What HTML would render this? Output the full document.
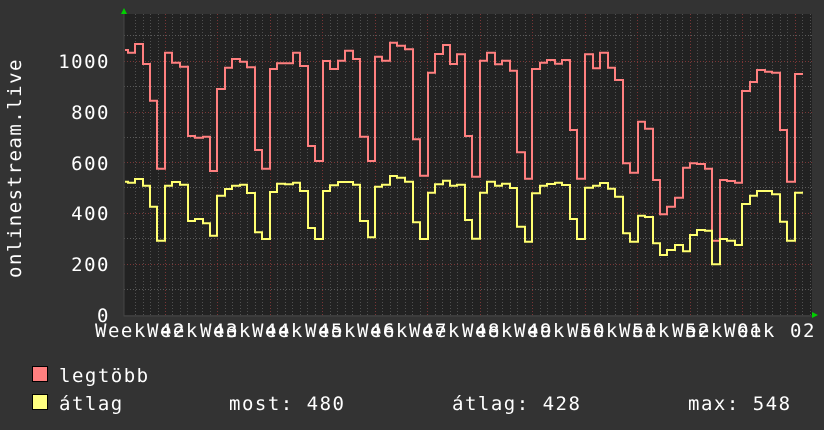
<!DOCTYPE html>
<html><head><meta charset="utf-8"><style>
html,body{margin:0;padding:0;background:#333333;}
svg{display:block}
text{font-family:"DejaVu Sans Mono","Liberation Mono",monospace;fill:#ffffff;font-size:19px;letter-spacing:1.5px}
</style></head><body>
<svg width="824" height="430" viewBox="0 0 824 430" xmlns="http://www.w3.org/2000/svg">
<rect width="824" height="430" fill="#333333"/>
<rect x="124" y="14" width="688" height="301" fill="#222222"/>
<g stroke="#5a5a5a" stroke-width="1" stroke-dasharray="1,2">
<path d="M124 289.5H812M124 238.5H812M124 187.5H812M124 137.5H812M124 86.5H812M124 35.5H812"/>
</g>
<g stroke="#7a3636" stroke-width="1" stroke-dasharray="1,2">
<path d="M124 264.5H812M124 213.5H812M124 162.5H812M124 112.5H812M124 61.5H812"/>
<path d="M165.5 14V315M217.5 14V315M270.5 14V315M322.5 14V315M375.5 14V315M427.5 14V315M480.5 14V315M532.5 14V315M585.5 14V315M637.5 14V315M690.5 14V315M742.5 14V315M795.5 14V315"/>
</g>
<path stroke="#505050" stroke-width="1" stroke-dasharray="1,2" d="M135.5 14V315M143.5 14V315M150.5 14V315M158.5 14V315M172.5 14V315M180.5 14V315M187.5 14V315M195.5 14V315M202.5 14V315M210.5 14V315M225.5 14V315M232.5 14V315M240.5 14V315M247.5 14V315M255.5 14V315M262.5 14V315M277.5 14V315M285.5 14V315M292.5 14V315M300.5 14V315M307.5 14V315M315.5 14V315M330.5 14V315M337.5 14V315M345.5 14V315M352.5 14V315M360.5 14V315M367.5 14V315M382.5 14V315M390.5 14V315M397.5 14V315M405.5 14V315M412.5 14V315M420.5 14V315M435.5 14V315M442.5 14V315M450.5 14V315M457.5 14V315M465.5 14V315M472.5 14V315M487.5 14V315M495.5 14V315M502.5 14V315M510.5 14V315M517.5 14V315M525.5 14V315M540.5 14V315M547.5 14V315M555.5 14V315M562.5 14V315M570.5 14V315M577.5 14V315M592.5 14V315M600.5 14V315M607.5 14V315M615.5 14V315M622.5 14V315M630.5 14V315M645.5 14V315M652.5 14V315M660.5 14V315M667.5 14V315M675.5 14V315M682.5 14V315M697.5 14V315M705.5 14V315M712.5 14V315M720.5 14V315M727.5 14V315M735.5 14V315M750.5 14V315M757.5 14V315M765.5 14V315M772.5 14V315M780.5 14V315M787.5 14V315M802.5 14V315M810.5 14V315"/>
<path d="M124 14V316H812" stroke="#444" stroke-width="1" fill="none"/>
<polygon points="121,14 127,14 124,8" fill="#00d000"/>
<polygon points="812,312 812,318 818,315" fill="#00d000"/>
<path fill="none" stroke="#ff7f7f" stroke-width="2" d="M125 50 H128 V52.7 H135 V44 H143 V64 H150 V100.7 H157 V168.7 H165 V52.7 H172 V62.7 H180 V66.7 H188 V136 H195 V137.7 H203 V136.7 H210 V171 H217 V89 H225 V67.7 H232 V59 H240 V61.7 H247 V67.3 H255 V150 H262 V168.7 H270 V69 H277 V63.3 H293 V52.7 H300 V66 H308 V146 H315 V161 H323 V61 H330 V69 H338 V60.7 H345 V50.7 H353 V59 H360 V136.7 H368 V161 H375 V56.7 H382 V60.7 H390 V42.7 H397 V45.7 H405 V49.3 H413 V139.3 H420 V175.7 H428 V72.7 H435 V54 H443 V45 H450 V64 H457 V54.3 H465 V136 H472 V176.7 H480 V60.7 H487 V52.7 H495 V64.3 H502 V60.7 H510 V70.7 H517 V152.3 H525 V178.7 H532 V69 H540 V62.7 H547 V60 H555 V63.7 H562 V60 H570 V130 H577 V178.7 H585 V54.3 H593 V68.3 H600 V52.7 H608 V67.7 H615 V80 H623 V163.3 H630 V172.7 H638 V121.7 H645 V128.7 H653 V180 H660 V214.3 H667 V206.7 H675 V197.7 H683 V167.7 H690 V163.3 H697 V164 H705 V168.7 H712 V240.7 H720 V180 H727 V181 H735 V182.7 H742 V91 H750 V82 H757 V70 H765 V71.7 H772 V72.7 H780 V130 H787 V181.7 H795 V74 H803"/>
<path fill="none" stroke="#ffff70" stroke-width="2" d="M125 181.7 H128 V182.7 H135 V179 H143 V185.7 H150 V206.7 H157 V240.7 H165 V185.7 H172 V182 H180 V184.7 H188 V221 H195 V219 H203 V223.3 H210 V235.7 H217 V195.7 H225 V189 H232 V185.7 H240 V184.7 H247 V193 H255 V232.3 H262 V239 H270 V192 H277 V183.7 H285 V184.3 H293 V182.7 H300 V191 H308 V228 H315 V239 H323 V191 H330 V185.3 H338 V182 H353 V184.7 H360 V221 H368 V237.3 H375 V186.7 H382 V184.7 H390 V176 H397 V177.7 H405 V181.7 H413 V222.3 H420 V239 H428 V192.7 H435 V184.3 H443 V180.7 H450 V185.7 H457 V184.7 H465 V220 H472 V238.7 H480 V192.7 H487 V181.7 H495 V185.7 H502 V183.7 H510 V188 H517 V226.7 H525 V241.7 H532 V193.3 H540 V185.7 H547 V184 H555 V182.7 H562 V185 H570 V219 H577 V239 H585 V187.7 H593 V185.7 H600 V183 H608 V188.7 H615 V196.7 H623 V233.3 H630 V241.7 H638 V215.7 H645 V217 H653 V243.3 H660 V255 H667 V250 H675 V245 H683 V251.3 H690 V235 H697 V230 H705 V230.7 H712 V264.3 H720 V239 H727 V240.7 H735 V245 H742 V204 H750 V195.7 H757 V191 H772 V194.3 H780 V221.7 H787 V240.7 H795 V192.7 H803"/>
<g text-anchor="end">
<text x="110" y="68">1000</text>
<text x="110" y="119">800</text>
<text x="110" y="170">600</text>
<text x="110" y="220">400</text>
<text x="110" y="271">200</text>
<text x="110" y="322">0</text>
</g>
<text transform="translate(21,168) rotate(-90)" text-anchor="middle">onlinestream.live</text>
<g>
<text x="95" y="337">Week</text>
<text x="147" y="337">Week</text>
<text x="200" y="337">Week</text>
<text x="252" y="337">Week</text>
<text x="305" y="337">Week</text>
<text x="357" y="337">Week</text>
<text x="409" y="337">Week</text>
<text x="462" y="337">Week</text>
<text x="514" y="337">Week</text>
<text x="567" y="337">Week</text>
<text x="619" y="337">Week</text>
<text x="672" y="337">Week</text>
<text x="724" y="337">Week</text>
<text x="160" y="337">42</text>
<text x="213" y="337">43</text>
<text x="265" y="337">44</text>
<text x="318" y="337">45</text>
<text x="370" y="337">46</text>
<text x="422" y="337">47</text>
<text x="475" y="337">48</text>
<text x="527" y="337">49</text>
<text x="580" y="337">50</text>
<text x="632" y="337">51</text>
<text x="685" y="337">52</text>
<text x="737" y="337">01</text>
<text x="790" y="337">02</text>
</g>
<rect x="32.5" y="366.5" width="15" height="15" fill="#ff7f7f" stroke="#000" stroke-width="1"/>
<rect x="32.5" y="394.5" width="15" height="15" fill="#ffff7f" stroke="#000" stroke-width="1"/>
<text x="59" y="382">legtöbb</text>
<text x="59" y="410">átlag</text>
<text x="229" y="410">most: 480</text>
<text x="452" y="410">átlag: 428</text>
<text x="688" y="410">max: 548</text>
</svg>
</body></html>
